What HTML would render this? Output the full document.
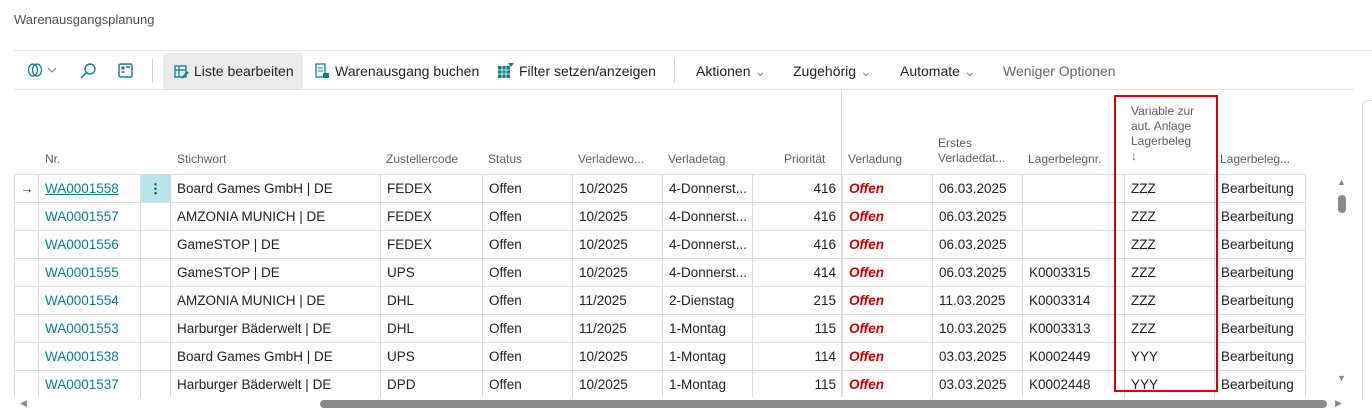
<!DOCTYPE html>
<html><head><meta charset="utf-8"><style>
*{margin:0;padding:0;box-sizing:border-box}
body{width:1372px;height:413px;overflow:hidden;background:#fff;font-family:"Liberation Sans",sans-serif;color:#212121;position:relative}
.abs{position:absolute;white-space:nowrap}
.title{left:14px;top:12px;font-size:13px;color:#505050}
.tb{font-size:14px;top:63px;color:#212121}
.hd{font-size:12px;color:#605e5c;line-height:15px}
table{position:absolute;left:14px;top:174px;width:1291px;border-collapse:collapse;table-layout:fixed;font-size:13.5px}
td{height:28px;border:1px solid #dcdcdc;padding:0 6px;white-space:nowrap;overflow:hidden}
td.l{color:#0b7e8a}
td.r{text-align:right}
td.o{color:#c00;font-weight:bold;font-style:italic}
</style></head><body>
<div class="abs title">Warenausgangsplanung</div>
<div class="abs" style="left:14px;top:50px;width:1358px;height:1px;background:#e6e6e6"></div>
<svg class="abs" style="left:26px;top:61px" width="36" height="20" viewBox="0 0 36 20"><g fill="none" stroke="#0b7e8a" stroke-width="1.3"><ellipse cx="7" cy="9" rx="4.5" ry="6"/><ellipse cx="11" cy="9" rx="4.5" ry="6"/></g><path d="M22 7l4 4 4-4" stroke="#888" fill="none" stroke-width="1.2"/></svg>
<svg class="abs" style="left:78px;top:61px" width="20" height="20"><circle cx="12" cy="8" r="5" fill="none" stroke="#0b7e8a" stroke-width="1.4"/><path d="M8.5 11.5L3 17" stroke="#0b7e8a" stroke-width="1.4"/></svg>
<svg class="abs" style="left:116px;top:61px" width="20" height="20"><rect x="3" y="3" width="13" height="13" rx="1.5" fill="none" stroke="#0b7e8a" stroke-width="1.4"/><rect x="5.5" y="5.5" width="3" height="3" fill="#0b7e8a"/><path d="M5.5 11h3M10 6h4" stroke="#0b7e8a" stroke-width="1.4"/></svg>
<div class="abs" style="left:152px;top:59px;width:1px;height:24px;background:#d0d0d0"></div>
<div class="abs" style="left:163px;top:53px;width:140px;height:36px;background:#ebebeb;border-radius:3px"></div>
<svg class="abs" style="left:174px;top:64px" width="16" height="16"><rect x="1" y="2" width="11" height="11" fill="none" stroke="#0b7e8a" stroke-width="1.3"/><path d="M1 6h11M5 2v11" stroke="#0b7e8a" stroke-width="1.2"/><path d="M8 14l6-6" stroke="#0b7e8a" stroke-width="2"/></svg>
<div class="abs tb" style="left:194px">Liste bearbeiten</div>
<svg class="abs" style="left:314px;top:63px" width="16" height="17"><rect x="2" y="1" width="9" height="13" fill="none" stroke="#0b7e8a" stroke-width="1.3"/><path d="M4 5h5M4 8h5" stroke="#0b7e8a"/><rect x="9" y="10" width="6" height="5" fill="#0b7e8a"/></svg>
<div class="abs tb" style="left:335px">Warenausgang buchen</div>
<svg class="abs" style="left:497px;top:62px" width="18" height="18"><rect x="1" y="4" width="12" height="12" fill="#0b7e8a"/><path d="M1 8h12M1 12h12M5 4v12M9 4v12" stroke="#fff" stroke-width=".8"/><path d="M11 1h6l-3 4z" fill="#0b7e8a"/></svg>
<div class="abs tb" style="left:519px">Filter setzen/anzeigen</div>
<div class="abs" style="left:674px;top:59px;width:1px;height:24px;background:#d0d0d0"></div>
<div class="abs tb" style="left:696px">Aktionen <span style="color:#888">&#8964;</span></div>
<div class="abs tb" style="left:793px">Zugehörig <span style="color:#888">&#8964;</span></div>
<div class="abs tb" style="left:900px">Automate <span style="color:#888">&#8964;</span></div>
<div class="abs tb" style="left:1003px;color:#666">Weniger Optionen</div>
<div class="abs" style="left:14px;top:89px;width:1340px;height:1px;background:#e0e0e0"></div>
<div class="abs hd" style="left:45px;top:152px">Nr.</div>
<div class="abs hd" style="left:177px;top:152px">Stichwort</div>
<div class="abs hd" style="left:386px;top:152px">Zustellercode</div>
<div class="abs hd" style="left:488px;top:152px">Status</div>
<div class="abs hd" style="left:578px;top:152px">Verladewo...</div>
<div class="abs hd" style="left:668px;top:152px">Verladetag</div>
<div class="abs hd" style="left:784px;top:152px">Priorität</div>
<div class="abs hd" style="left:848px;top:152px">Verladung</div>
<div class="abs hd" style="left:938px;top:136px">Erstes<br>Verladedat...</div>
<div class="abs hd" style="left:1028px;top:152px">Lagerbelegnr.</div>
<div class="abs hd" style="left:1131px;top:104px">Variable zur<br>aut. Anlage<br>Lagerbeleg<br>&#8595;</div>
<div class="abs hd" style="left:1220px;top:152px">Lagerbeleg...</div>
<div class="abs" style="left:841px;top:90px;width:1px;height:308px;background:#d6d6d6"></div>
<table>
<colgroup><col style="width:24px"><col style="width:102px"><col style="width:30px"><col style="width:210px"><col style="width:102px"><col style="width:90px"><col style="width:90px"><col style="width:90px"><col style="width:90px"><col style="width:90px"><col style="width:90px"><col style="width:102px"><col style="width:90px"><col style="width:91px"></colgroup>
<tr><td style="padding:0 5px">&#8594;</td><td class="l" style="text-decoration:underline">WA0001558</td><td style="background:#b5e6ea;text-align:center;font-weight:bold">&#8942;</td><td>Board Games GmbH | DE</td><td>FEDEX</td><td>Offen</td><td>10/2025</td><td>4-Donnerst...</td><td class="r">416</td><td class="o">Offen</td><td>06.03.2025</td><td></td><td>ZZZ</td><td>Bearbeitung</td></tr>
<tr><td></td><td class="l">WA0001557</td><td></td><td>AMZONIA MUNICH | DE</td><td>FEDEX</td><td>Offen</td><td>10/2025</td><td>4-Donnerst...</td><td class="r">416</td><td class="o">Offen</td><td>06.03.2025</td><td></td><td>ZZZ</td><td>Bearbeitung</td></tr>
<tr><td></td><td class="l">WA0001556</td><td></td><td>GameSTOP | DE</td><td>FEDEX</td><td>Offen</td><td>10/2025</td><td>4-Donnerst...</td><td class="r">416</td><td class="o">Offen</td><td>06.03.2025</td><td></td><td>ZZZ</td><td>Bearbeitung</td></tr>
<tr><td></td><td class="l">WA0001555</td><td></td><td>GameSTOP | DE</td><td>UPS</td><td>Offen</td><td>10/2025</td><td>4-Donnerst...</td><td class="r">414</td><td class="o">Offen</td><td>06.03.2025</td><td>K0003315</td><td>ZZZ</td><td>Bearbeitung</td></tr>
<tr><td></td><td class="l">WA0001554</td><td></td><td>AMZONIA MUNICH | DE</td><td>DHL</td><td>Offen</td><td>11/2025</td><td>2-Dienstag</td><td class="r">215</td><td class="o">Offen</td><td>11.03.2025</td><td>K0003314</td><td>ZZZ</td><td>Bearbeitung</td></tr>
<tr><td></td><td class="l">WA0001553</td><td></td><td>Harburger Bäderwelt | DE</td><td>DHL</td><td>Offen</td><td>11/2025</td><td>1-Montag</td><td class="r">115</td><td class="o">Offen</td><td>10.03.2025</td><td>K0003313</td><td>ZZZ</td><td>Bearbeitung</td></tr>
<tr><td></td><td class="l">WA0001538</td><td></td><td>Board Games GmbH | DE</td><td>UPS</td><td>Offen</td><td>10/2025</td><td>1-Montag</td><td class="r">114</td><td class="o">Offen</td><td>03.03.2025</td><td>K0002449</td><td>YYY</td><td>Bearbeitung</td></tr>
<tr><td></td><td class="l">WA0001537</td><td></td><td>Harburger Bäderwelt | DE</td><td>DPD</td><td>Offen</td><td>10/2025</td><td>1-Montag</td><td class="r">115</td><td class="o">Offen</td><td>03.03.2025</td><td>K0002448</td><td>YYY</td><td>Bearbeitung</td></tr>
</table>
<div class="abs" style="left:0;top:397px;width:1372px;height:16px;background:#fff"></div>
<div class="abs" style="left:1114px;top:95px;width:104px;height:297px;border:2px solid #e00000"></div>
<div class="abs" style="left:1337px;top:177px;font-size:9px;color:#888">&#9650;</div>
<div class="abs" style="left:1338px;top:195px;width:8px;height:18px;border-radius:4px;background:#8a8a8a"></div>
<div class="abs" style="left:1337px;top:373px;font-size:9px;color:#888">&#9660;</div>
<div class="abs" style="left:1362px;top:100px;width:10px;height:300px;border-left:1px solid #e0e0e0;border-top:1px solid #e0e0e0;border-radius:6px 0 0 0"></div>
<div class="abs" style="left:20px;top:398px;font-size:9px;color:#888">&#9664;</div>
<div class="abs" style="left:320px;top:400px;width:1007px;height:8px;border-radius:4px;background:#8a8a8a"></div>
<div class="abs" style="left:1335px;top:398px;font-size:9px;color:#888">&#9654;</div>
</body></html>
